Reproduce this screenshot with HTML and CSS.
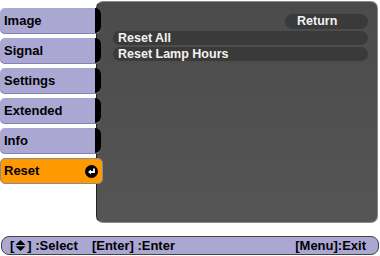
FILE: index.html
```html
<!DOCTYPE html>
<html lang="en">
<head>
	<meta charset="UTF-8">
	<title>Reset</title>
	<link rel="stylesheet" href="styles.css">
</head>
<body>
	<div class="screen">
		<div class="screen__main">
			<div class="menu-tabs">
				<div class="menu-tabs__tab">Image</div>
				<div class="menu-tabs__tab">Signal</div>
				<div class="menu-tabs__tab">Settings</div>
				<div class="menu-tabs__tab">Extended</div>
				<div class="menu-tabs__tab">Info</div>
				<div class="menu-tabs__tab active">
					Reset
					<svg class="enter-icon" width="13" height="13" viewBox="0 0 13 13">
						<circle cx="6.5" cy="6.5" r="6.5" fill="#000"/>
						<path d="M9 3.5v3.5H5" fill="none" stroke="#fff" stroke-width="1.8"/>
						<path d="M3 7l3-2.6v5.2z" fill="#fff"/>
					</svg>
				</div>
			</div>
			<div class="panel">
				<div class="panel__return">Return</div>
				<div class="panel__row">Reset All</div>
				<div class="panel__row">Reset Lamp Hours</div>
			</div>
		</div>
		<div class="help-bar">
			<span class="help-bar__item">[<svg width="11" height="11" viewBox="0 0 11 11"><path d="M5.5 0L10.5 5H0.5z" fill="#000"/><path d="M0.5 6.2H10.5L5.5 11z" fill="#000"/></svg>] :Select</span>
			<span class="help-bar__item">[Enter] :Enter</span>
			<span class="help-bar__item help-bar__item--right">[Menu]:Exit</span>
		</div>
	</div>
</body>
</html>
```

FILE: styles.css
```css
*{
	margin: 0;
	padding: 0;
	box-sizing: border-box;
}
body{
	width: 380px;
	height: 256px;
	background-color: #fff;
	font-family: "Liberation Sans", Arial, sans-serif;
	font-weight: bold;
	overflow: hidden;
}

.screen{
	display: flex;
	flex-direction: column;
}
.screen__main{
	display: flex;
	height: 223px;
}

.menu-tabs{
	position: relative;
	z-index: 1;
	width: 96px;
	flex-shrink: 0;
	display: flex;
	flex-direction: column;
	gap: 4px;
	padding-top: 8px;
}
.menu-tabs__tab{
	width: 101px;
	height: 26px;
	line-height: 26px;
	padding-left: 4px;
	font-size: 13px;
	color: #000;
	border-radius: 5px 6px 6px 5px;
	background: linear-gradient(to right, #aaa7d3 95px, #000 95px);
	box-shadow: inset 0 -1px 0 #8683b4;
}
.menu-tabs__tab.active{
	width: 103px;
	display: flex;
	align-items: center;
	justify-content: space-between;
	padding: 0 4px 0 3px;
	background: #ff9900;
	border: 1px solid #8c8c8c;
	border-radius: 5px;
	box-shadow: none;
}
.enter-icon{
	display: block;
}

.panel{
	flex-grow: 1;
	margin: 1px 2px 0 0;
	padding: 12px 9px 0 16px;
	background: linear-gradient(#4b4b4b, #555);
	border: 1px solid #8a8a8a;
	border-left-color: #222;
	border-radius: 7px;
	display: flex;
	flex-direction: column;
	gap: 2px;
	color: #f2f2f2;
	font-size: 12.5px;
}
.panel__return{
	align-self: flex-end;
	width: 83px;
	height: 15px;
	line-height: 15px;
	padding-left: 12px;
	background-color: #3a3a3a;
	border-radius: 8px;
}
.panel__row{
	height: 14px;
	line-height: 14px;
	padding-left: 5px;
	background-color: #3a3a3a;
	border-radius: 7px;
}

.help-bar{
	margin: 13px 1px 0 1px;
	height: 19px;
	display: flex;
	align-items: center;
	gap: 14px;
	padding: 0 12px 0 8px;
	background-color: #aaa7d3;
	border: 1px solid #444;
	border-radius: 8px;
	font-size: 13px;
	color: #000;
}
.help-bar__item svg{
	vertical-align: -1px;
	margin: 0 1px;
}
.help-bar__item--right{
	margin-left: auto;
}
```
